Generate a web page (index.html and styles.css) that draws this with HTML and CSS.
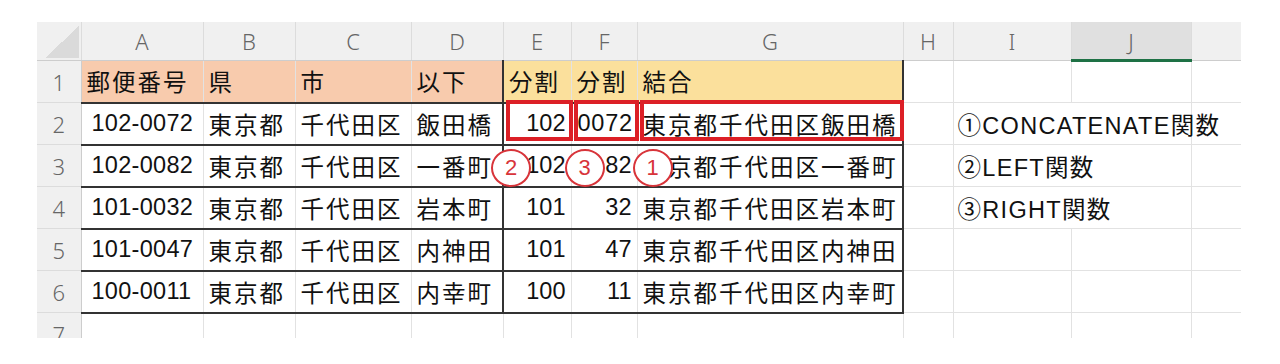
FILE: index.html
```html
<!DOCTYPE html>
<html lang="ja">
<head>
  <meta charset="UTF-8">
  <title>住所の分割と結合</title>
  <link rel="stylesheet" href="styles.css">
</head>
<body>

<div class="sheet">
  <table class="grid">
    <colgroup>
      <col style="width:44px"><col style="width:122px"><col style="width:92px"><col style="width:116px">
      <col style="width:92px"><col style="width:68px"><col style="width:66px"><col style="width:266px">
      <col style="width:50px"><col style="width:118px"><col style="width:120px"><col style="width:50px">
    </colgroup>
    <thead>
      <tr>
        <th class="corner"></th>
        <th>A</th><th>B</th><th>C</th><th>D</th><th>E</th><th>F</th><th>G</th>
        <th>H</th><th>I</th><th class="sel">J</th><th></th>
      </tr>
    </thead>
    <tbody>
      <tr class="rec">
        <th class="rh">1</th>
        <td class="or">郵便番号</td><td class="or">県</td><td class="or">市</td><td class="or">以下</td>
        <td class="ye">分割</td><td class="ye">分割</td><td class="ye">結合</td>
        <td></td><td></td><td></td><td></td>
      </tr>
      <tr class="rec">
        <th class="rh">2</th>
        <td class="code">102-0072</td><td>東京都</td><td>千代田区</td><td>飯田橋</td>
        <td class="num"><span class="mark"></span>102</td>
        <td class="digits"><span class="mark"></span>0072</td>
        <td><span class="mark"></span>東京都千代田区飯田橋</td>
        <td></td><td class="spill">①CONCATENATE関数</td><td></td><td></td>
      </tr>
      <tr class="rec">
        <th class="rh">3</th>
        <td class="code">102-0082</td><td>東京都</td><td>千代田区</td><td>一番町</td>
        <td class="num"><span class="badge b-left">2</span>102</td>
        <td class="num"><span class="badge b-mid">3</span>82</td>
        <td><span class="badge b-right">1</span>東京都千代田区一番町</td>
        <td></td><td class="spill">②LEFT関数</td><td></td><td></td>
      </tr>
      <tr class="rec">
        <th class="rh">4</th>
        <td class="code">101-0032</td><td>東京都</td><td>千代田区</td><td>岩本町</td>
        <td class="num">101</td><td class="num">32</td><td>東京都千代田区岩本町</td>
        <td></td><td class="spill">③RIGHT関数</td><td></td><td></td>
      </tr>
      <tr class="rec">
        <th class="rh">5</th>
        <td class="code">101-0047</td><td>東京都</td><td>千代田区</td><td>内神田</td>
        <td class="num">101</td><td class="num">47</td><td>東京都千代田区内神田</td>
        <td></td><td></td><td></td><td></td>
      </tr>
      <tr class="rec">
        <th class="rh">6</th>
        <td class="code">100-0011</td><td>東京都</td><td>千代田区</td><td>内幸町</td>
        <td class="num">100</td><td class="num">11</td><td>東京都千代田区内幸町</td>
        <td></td><td></td><td></td><td></td>
      </tr>
      <tr>
        <th class="rh">7</th>
        <td></td><td></td><td></td><td></td><td></td><td></td><td></td>
        <td></td><td></td><td></td><td></td>
      </tr>
    </tbody>
  </table>
</div>

</body>
</html>
```

FILE: styles.css
```css
body {
  margin: 0;
  background: #fff;
  font-family: "Liberation Sans", "Noto Sans CJK JP", sans-serif;
  color: #111;
}
.sheet {
  width: 1204px;
  height: 316px;
  margin: 22px 0 0 37px;
  overflow: hidden;
}
.grid {
  border-collapse: collapse;
  table-layout: fixed;
  width: 1204px;
}

/* column letters */
thead th {
  height: 37px;
  padding: 0;
  background: #f0f0f0;
  color: #666;
  font-family: "Noto Sans", "Liberation Sans", sans-serif;
  font-weight: 300;
  font-size: 22px;
  border-right: 1px solid #dcdcdc;
  border-bottom: 1px solid #cdcdcd;
}
thead th.sel {
  background: #e0e0e0;
  border-bottom: 3px solid #1e7145;
}
th.corner {
  background: #f0f0f0 linear-gradient(to bottom right, transparent 50%, #dadada 50%) no-repeat right 2px bottom 2px / 34px 32px;
}

/* row numbers */
tbody th.rh {
  padding: 0;
  background: #f0f0f0;
  color: #666;
  font-family: "Noto Sans", "Liberation Sans", sans-serif;
  font-weight: 300;
  font-size: 22px;
  border-right: 1px solid #cdcdcd;
  border-bottom: 1px solid #dcdcdc;
}
tbody tr {
  height: 42px;
}
td {
  position: relative;
  padding: 0 5px;
  font-size: 23.5px;
  letter-spacing: 2px;
  white-space: nowrap;
  vertical-align: middle;
  border: 1px solid #e2e2e2;
}
td.num {
  text-align: right;
  letter-spacing: 0;
}
td.code {
  padding-left: 10px;
  letter-spacing: 0.3px;
}
td.digits {
  padding-left: 6px;
  letter-spacing: 0.8px;
}

/* table lines for A:G */
tr.rec td:nth-child(-n+8) {
  border-bottom: 2px solid #333;
}
tr.rec td:nth-child(6) {
  border-left: 2px solid #333;
}
tr.rec td:nth-child(8) {
  border-right: 2px solid #333;
}
td.or {
  background: #f8cbad;
}
td.ye {
  background: #fbe09c;
}

/* notes overflowing into the next column */
td.spill {
  border-right-style: hidden;
  padding-left: 4px;
  letter-spacing: 1.3px;
}

/* highlight boxes and callouts */
.mark {
  position: absolute;
  left: 2px;
  right: -2px;
  top: -4px;
  bottom: 3px;
  border: 4px solid #dc1f26;
}
.badge {
  position: absolute;
  top: 3px;
  width: 36px;
  height: 34px;
  border: 2px solid #d8343a;
  border-radius: 50%;
  background: #fff;
  color: #d8343a;
  font-size: 22px;
  line-height: 34px;
  letter-spacing: 0;
  text-align: center;
  z-index: 1;
}
.b-left {
  left: -13px;
}
.b-mid {
  left: -7px;
}
.b-right {
  left: -5px;
}
```
